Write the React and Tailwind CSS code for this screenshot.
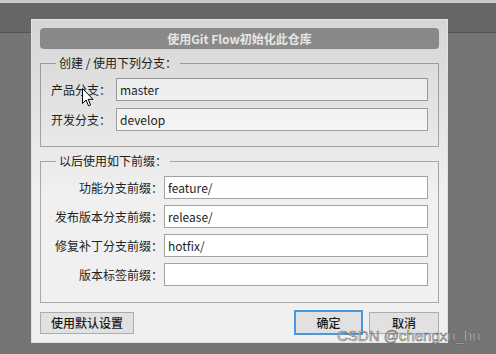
import React from "react";

const font = "font-['Microsoft_YaHei','Noto_Sans_CJK_SC','Noto_Sans',sans-serif]";

const Field = ({ value }) => (
  <div className="flex-1 h-[23px] border border-[#a3a3a3] bg-white pl-[3px] text-[12px] leading-[21px] text-[#1e1e1e]">
    {value}
  </div>
);

const Button = ({ children, focused, className = "" }) => (
  <div
    className={`flex items-center justify-center bg-[#e1e1e1] text-[12px] font-medium text-[#1a1a1a] ${
      focused
        ? "h-[25px] border-2 border-[#4a98dc]"
        : "h-[22px] border border-[#adadad]"
    } ${className}`}
  >
    {children}
  </div>
);

const Cursor = () => (
  <svg
    width="12"
    height="19"
    viewBox="0 0 12 19"
    className="absolute left-[82px] top-[88px] pointer-events-none"
  >
    <path
      d="M0.5 0.5 L0.5 15.5 L4 12 L6.5 17.8 L8.6 16.9 L6.2 11.3 L11 11.3 Z"
      fill="#fff"
      stroke="#000"
      strokeWidth="1"
      strokeLinejoin="round"
    />
  </svg>
);

export default function App() {
  const prefixes = [
    { label: "功能分支前缀：", value: "feature/" },
    { label: "发布版本分支前缀：", value: "release/" },
    { label: "修复补丁分支前缀：", value: "hotfix/" },
    { label: "版本标签前缀：", value: "" },
  ];

  return (
    <div className={`relative w-[496px] h-[354px] overflow-hidden bg-[#757575] ${font}`}>
      {/* window behind */}
      <div className="h-[3px] bg-[#cbcbcb]" />
      <div className="h-[29px] bg-[#666666]" />
      <div className="h-px bg-[#545454]" />

      {/* dialog */}
      <div className="absolute left-[31px] top-[19px] w-[417px] h-[324px] border border-[#e2e2e2] bg-[#f0f0f0] px-[8px] pt-[8px]">
        <div className="h-[21px] rounded-[4px] bg-[#989898] flex items-center justify-center text-[12px] font-bold text-white">
          使用Git Flow初始化此仓库
        </div>

        <fieldset className="mt-[7px] border border-[#a8a8a8] pl-[10px] pr-[10px] pt-[8px] pb-[15px]">
          <legend className="ml-[5px] px-[3px] text-[12px] leading-[14px] text-[#222]">
            创建 / 使用下列分支：
          </legend>
          <div className="flex flex-col gap-[7px]">
            <div className="flex items-center">
              <span className="w-[65px] text-[12px] text-[#222]">产品分支：</span>
              <Field value="master" />
            </div>
            <div className="flex items-center">
              <span className="w-[65px] text-[12px] text-[#222]">开发分支：</span>
              <Field value="develop" />
            </div>
          </div>
        </fieldset>

        <fieldset className="mt-[7px] border border-[#a8a8a8] pl-[10px] pr-[10px] pt-[8px] pb-[16px]">
          <legend className="ml-[5px] px-[3px] text-[12px] leading-[14px] text-[#222]">
            以后使用如下前缀：
          </legend>
          <div className="flex flex-col gap-[6px]">
            {prefixes.map((p) => (
              <div key={p.label} className="flex items-center">
                <span className="w-[113px] pr-[1px] text-right text-[12px] text-[#222]">
                  {p.label}
                </span>
                <Field value={p.value} />
              </div>
            ))}
          </div>
        </fieldset>

        <div className="mt-[7px] flex items-center">
          <Button className="w-[94px]">使用默认设置</Button>
          <div className="flex-1" />
          <Button focused className="w-[69px]">确定</Button>
          <Button className="ml-[6px] w-[70px]">取消</Button>
        </div>

        {/* screen shading */}
        <div className="pointer-events-none absolute inset-x-0 top-0 h-[175px] bg-linear-to-b from-black/[0.11] to-transparent" />
      </div>

      <Cursor />

      <div className="absolute left-[337px] top-[327px] text-[15px] leading-[18px] font-['Liberation_Sans',Arial,sans-serif] text-white/80 [-webkit-text-stroke:0.6px_rgba(70,70,70,0.85)]">
        CSDN @chengxu_hu
      </div>
    </div>
  );
}
